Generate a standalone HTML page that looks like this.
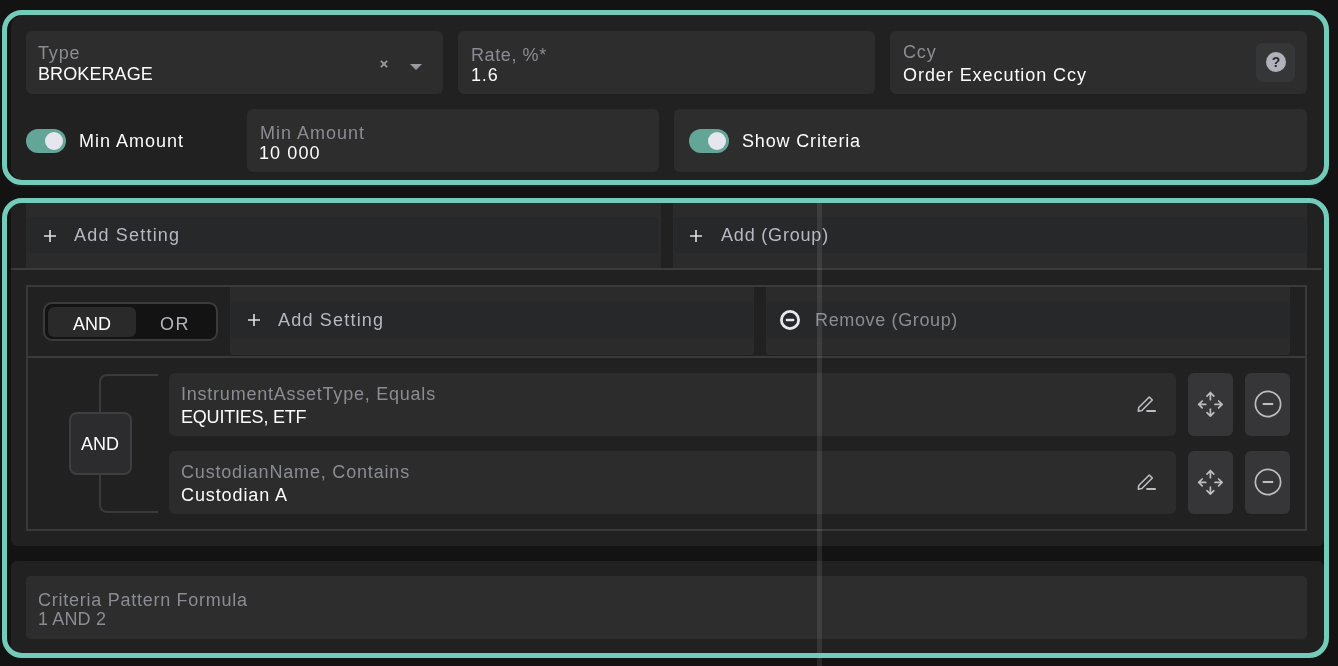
<!DOCTYPE html>
<html><head><meta charset="utf-8">
<style>
html,body{margin:0;padding:0;}
body{width:1338px;height:666px;overflow:hidden;background:#131313;position:relative;font-family:"Liberation Sans",sans-serif;}
div,span{box-sizing:border-box;}
.a{position:absolute;}
.t{position:absolute;will-change:transform;font-size:18px;line-height:18px;white-space:nowrap;}
.lbl{color:#8b8c93;letter-spacing:0.85px;}
.val{color:#fcfcfc;letter-spacing:0.85px;}
.fld{position:absolute;background:#2d2d2d;border-radius:6px;}
.teal{position:absolute;border:5px solid #73cbb9;border-radius:20px;}
.tog{position:absolute;width:40px;height:24px;border-radius:12px;background:#63a697;}
.tog i{position:absolute;left:19px;top:3px;width:18px;height:18px;border-radius:50%;background:#e6e6f0;}
.blk{position:absolute;background:#2b2b2b;}
.btn{position:absolute;background:#27282a;border-radius:4px;}
.line{position:absolute;background:#3a3a3a;}
.card{position:absolute;background:#2c2c2c;border-radius:6px;}
.sq{position:absolute;background:#363638;border-radius:6px;}
</style></head>
<body>
<!-- PANEL 1 -->
<div class="a" style="left:11px;top:15px;width:1313px;height:165px;background:#212121;border-radius:12px;"></div>

<div class="fld" style="left:26px;top:31px;width:417px;height:63px;"></div>
<div class="t lbl" style="left:38px;top:44px;">Type</div>
<div class="t val" style="left:38px;top:65px;letter-spacing:0.1px;">BROKERAGE</div>
<svg class="a" style="left:378px;top:58px;" width="12" height="12" viewBox="0 0 12 12"><path d="M2.9 2.9L9.1 9.1M9.1 2.9L2.9 9.1" stroke="#9a9aa0" stroke-width="1.8"/></svg>
<svg class="a" style="left:409px;top:63px;" width="14" height="8" viewBox="0 0 14 8"><path d="M1 1L13 1L7 7Z" fill="#9a9aa0"/></svg>

<div class="fld" style="left:458px;top:31px;width:417px;height:63px;"></div>
<div class="t lbl" style="left:471px;top:46px;letter-spacing:0.6px;">Rate, %*</div>
<div class="t val" style="left:471px;top:66px;">1.6</div>

<div class="fld" style="left:890px;top:31px;width:417px;height:63px;"></div>
<div class="t lbl" style="left:903px;top:43px;">Ccy</div>
<div class="t val" style="left:903px;top:66px;letter-spacing:0.94px;">Order Execution Ccy</div>
<div class="a" style="left:1256px;top:43px;width:39px;height:39px;background:#353637;border-radius:7px;"></div>
<div class="a" style="left:1266px;top:52px;width:20px;height:20px;border-radius:50%;background:#b0b1ba;"></div>
<div class="a" style="left:1266px;top:55px;width:20px;text-align:center;font-size:14px;line-height:14px;font-weight:bold;color:#2a2a2c;will-change:transform;">?</div>

<div class="tog" style="left:26px;top:129px;"><i></i></div>
<div class="t val" style="left:79px;top:132px;letter-spacing:1px;">Min Amount</div>

<div class="fld" style="left:247px;top:109px;width:412px;height:63px;"></div>
<div class="t lbl" style="left:260px;top:124px;letter-spacing:1px;">Min Amount</div>
<div class="t val" style="left:259px;top:144px;letter-spacing:1.1px;">10 000</div>

<div class="fld" style="left:674px;top:109px;width:633px;height:63px;"></div>
<div class="tog" style="left:689px;top:129px;"><i></i></div>
<div class="t val" style="left:742px;top:132px;letter-spacing:0.84px;">Show Criteria</div>

<div class="a" style="left:11px;top:180px;width:1310px;height:7px;background:#1b1b1b;border-radius:0 0 6px 6px;"></div>
<div class="teal" style="left:2px;top:10px;width:1327px;height:175px;"></div>

<!-- PANEL 2 -->
<div class="a" style="left:11px;top:203px;width:1313px;height:343px;background:#212121;border-radius:6px;"></div>

<div class="blk" style="left:26px;top:203px;width:635px;height:65px;"></div>
<div class="btn" style="left:27px;top:217px;width:632px;height:36px;"></div>
<svg class="a" style="left:44px;top:230px;" width="12" height="12" viewBox="0 0 12 12"><path d="M6 0V12M0 6H12" stroke="#e0e0e4" stroke-width="1.6"/></svg>
<div class="t" style="left:74px;top:226px;color:#b7b8c2;letter-spacing:1.2px;">Add Setting</div>

<div class="blk" style="left:673px;top:203px;width:634px;height:65px;"></div>
<div class="btn" style="left:674px;top:217px;width:632px;height:36px;"></div>
<svg class="a" style="left:690px;top:230px;" width="12" height="12" viewBox="0 0 12 12"><path d="M6 0V12M0 6H12" stroke="#e0e0e4" stroke-width="1.6"/></svg>
<div class="t" style="left:721px;top:226px;color:#b7b8c2;letter-spacing:0.81px;">Add (Group)</div>

<div class="line" style="left:11px;top:268px;width:1311px;height:2px;"></div>

<!-- group box -->
<div class="a" style="left:26px;top:285px;width:1281px;height:246px;border:2px solid #3a3a3a;"></div>

<div class="a" style="left:43px;top:302px;width:175px;height:39px;border:2px solid #3b3b3b;background:#131313;border-radius:9px;"></div>
<div class="a" style="left:48px;top:307px;width:88px;height:30px;background:#2a2a2a;border-radius:6px;"></div>
<div class="t" style="left:73px;top:315px;color:#fcfcfc;">AND</div>
<div class="t" style="left:160px;top:315px;color:#b3b4bd;letter-spacing:1.6px;">OR</div>

<div class="blk" style="left:230px;top:287px;width:524px;height:68px;border-radius:0 0 4px 4px;"></div>
<div class="btn" style="left:231px;top:302px;width:522px;height:36px;"></div>
<svg class="a" style="left:248px;top:314px;" width="12" height="12" viewBox="0 0 12 12"><path d="M6 0V12M0 6H12" stroke="#e0e0e4" stroke-width="1.6"/></svg>
<div class="t" style="left:278px;top:311px;color:#b7b8c2;letter-spacing:1.2px;">Add Setting</div>

<div class="blk" style="left:766px;top:287px;width:524px;height:68px;border-radius:0 0 4px 4px;"></div>
<div class="btn" style="left:767px;top:302px;width:523px;height:36px;"></div>
<svg class="a" style="left:779px;top:309px;" width="22" height="22" viewBox="0 0 22 22"><circle cx="11" cy="11" r="8.6" fill="none" stroke="#e8e8f0" stroke-width="2.8"/><path d="M7.9 11H14.1" stroke="#e8e8f0" stroke-width="2.6" stroke-linecap="round"/></svg>
<div class="t" style="left:815px;top:311px;color:#8b8c93;letter-spacing:0.64px;">Remove (Group)</div>

<div class="line" style="left:28px;top:356px;width:1277px;height:2px;"></div>

<!-- conditions -->
<div class="a" style="left:99px;top:374px;width:59px;height:139px;border:2px solid #3a3a3a;border-right:none;border-radius:8px 0 0 8px;"></div>
<div class="a" style="left:69px;top:412px;width:63px;height:63px;border:2px solid #3e3e41;background:#2c2c2f;border-radius:8px;"></div>
<div class="t" style="left:81px;top:435px;color:#fcfcfc;">AND</div>

<div class="card" style="left:169px;top:373px;width:1007px;height:63px;"></div>
<div class="t lbl" style="left:181px;top:385px;letter-spacing:0.77px;">InstrumentAssetType, Equals</div>
<div class="t val" style="left:181px;top:408px;letter-spacing:-0.2px;">EQUITIES, ETF</div>
<svg class="a" style="left:1130px;top:388px;" width="32" height="32" viewBox="0 0 32 32"><path d="M19.3 9L22.3 12L11.9 22.5L8.3 23.2L8.7 19.5Z" fill="none" stroke="#bcbdc3" stroke-width="1.6" stroke-linejoin="round"/><path d="M17.1 23H25.1" stroke="#bcbdc3" stroke-width="1.9" stroke-linecap="round"/></svg>
<div class="sq" style="left:1188px;top:373px;width:45px;height:63px;"></div>
<svg class="a" style="left:1196px;top:390px;" width="28" height="28" viewBox="0 0 28 28"><g fill="none" stroke="#bcbdc3" stroke-width="1.7" stroke-linecap="round" stroke-linejoin="round"><path d="M14.4 9.75V2.7M11 6.2L14.4 2.7L17.8 6.2M14.4 19.05V26.1M11 22.6L14.4 26.1L17.8 22.6M9.75 14.4H2.7M6.2 11L2.7 14.4L6.2 17.8M19.05 14.4H26.1M22.6 11L26.1 14.4L22.6 17.8"/></g></svg>
<div class="sq" style="left:1245px;top:373px;width:45px;height:63px;"></div>
<svg class="a" style="left:1253px;top:390px;" width="30" height="30" viewBox="0 0 30 30"><circle cx="15" cy="14" r="12.6" fill="none" stroke="#bcbdc3" stroke-width="1.7"/><path d="M9.7 14H20.2" stroke="#bcbdc3" stroke-width="2.1"/></svg>

<div class="card" style="left:169px;top:451px;width:1007px;height:63px;"></div>
<div class="t lbl" style="left:181px;top:463px;letter-spacing:0.82px;">CustodianName, Contains</div>
<div class="t val" style="left:181px;top:486px;letter-spacing:0.9px;">Custodian A</div>
<svg class="a" style="left:1130px;top:466px;" width="32" height="32" viewBox="0 0 32 32"><path d="M19.3 9L22.3 12L11.9 22.5L8.3 23.2L8.7 19.5Z" fill="none" stroke="#bcbdc3" stroke-width="1.6" stroke-linejoin="round"/><path d="M17.1 23H25.1" stroke="#bcbdc3" stroke-width="1.9" stroke-linecap="round"/></svg>
<div class="sq" style="left:1188px;top:451px;width:45px;height:63px;"></div>
<svg class="a" style="left:1196px;top:468px;" width="28" height="28" viewBox="0 0 28 28"><g fill="none" stroke="#bcbdc3" stroke-width="1.7" stroke-linecap="round" stroke-linejoin="round"><path d="M14.4 9.75V2.7M11 6.2L14.4 2.7L17.8 6.2M14.4 19.05V26.1M11 22.6L14.4 26.1L17.8 22.6M9.75 14.4H2.7M6.2 11L2.7 14.4L6.2 17.8M19.05 14.4H26.1M22.6 11L26.1 14.4L22.6 17.8"/></g></svg>
<div class="sq" style="left:1245px;top:451px;width:45px;height:63px;"></div>
<svg class="a" style="left:1253px;top:468px;" width="30" height="30" viewBox="0 0 30 30"><circle cx="15" cy="14" r="12.6" fill="none" stroke="#bcbdc3" stroke-width="1.7"/><path d="M9.7 14H20.2" stroke="#bcbdc3" stroke-width="2.1"/></svg>

<!-- bottom card -->
<div class="a" style="left:11px;top:561px;width:1313px;height:95px;background:#212121;border-radius:6px;"></div>
<div class="fld" style="left:26px;top:576px;width:1281px;height:63px;border-radius:5px;"></div>
<div class="t lbl" style="left:38px;top:591px;letter-spacing:0.74px;">Criteria Pattern Formula</div>
<div class="t lbl" style="left:38px;top:610px;letter-spacing:0.15px;">1 AND 2</div>

<!-- overlay vertical line -->
<div class="a" style="left:817px;top:203px;width:5px;height:463px;background:rgba(255,255,255,0.09);"></div>

<div class="teal" style="left:2px;top:198px;width:1327px;height:460px;"></div>
</body></html>
